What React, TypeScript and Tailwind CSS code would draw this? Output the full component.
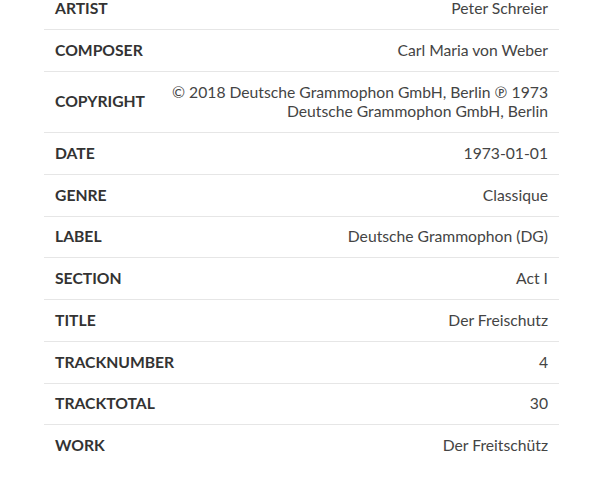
// App.tsx — track tag list (metadata table)

const tags: [string, string][] = [
  ['ARTIST', 'Peter Schreier'],
  ['COMPOSER', 'Carl Maria von Weber'],
  ['COPYRIGHT', '© 2018 Deutsche Grammophon GmbH, Berlin ℗ 1973 Deutsche Grammophon GmbH, Berlin'],
  ['DATE', '1973-01-01'],
  ['GENRE', 'Classique'],
  ['LABEL', 'Deutsche Grammophon (DG)'],
  ['SECTION', 'Act I'],
  ['TITLE', 'Der Freischutz'],
  ['TRACKNUMBER', '4'],
  ['TRACKTOTAL', '30'],
  ['WORK', 'Der Freitschütz'],
]

export default function App() {
  return (
    <div
      className="w-[598px] h-[499px] overflow-hidden bg-white"
      style={{ fontFamily: 'Lato, "Open Sans", sans-serif' }}
    >
      <div className="ml-[44px] w-[515px] -mt-[11.5px] text-[15.7px] leading-[19.25px]">
        {tags.map(([key, value], i) => (
          <div
            key={key}
            className={
              'flex items-center justify-between gap-4 px-[11px] py-[10.75px] ' +
              (i < tags.length - 1 ? 'border-b border-[#e6e6e6]' : '')
            }
          >
            <span className="font-bold text-[#333333] shrink-0">{key}</span>
            <span className="text-right text-[#444444] max-w-[385px]">{value}</span>
          </div>
        ))}
      </div>
    </div>
  )
}
